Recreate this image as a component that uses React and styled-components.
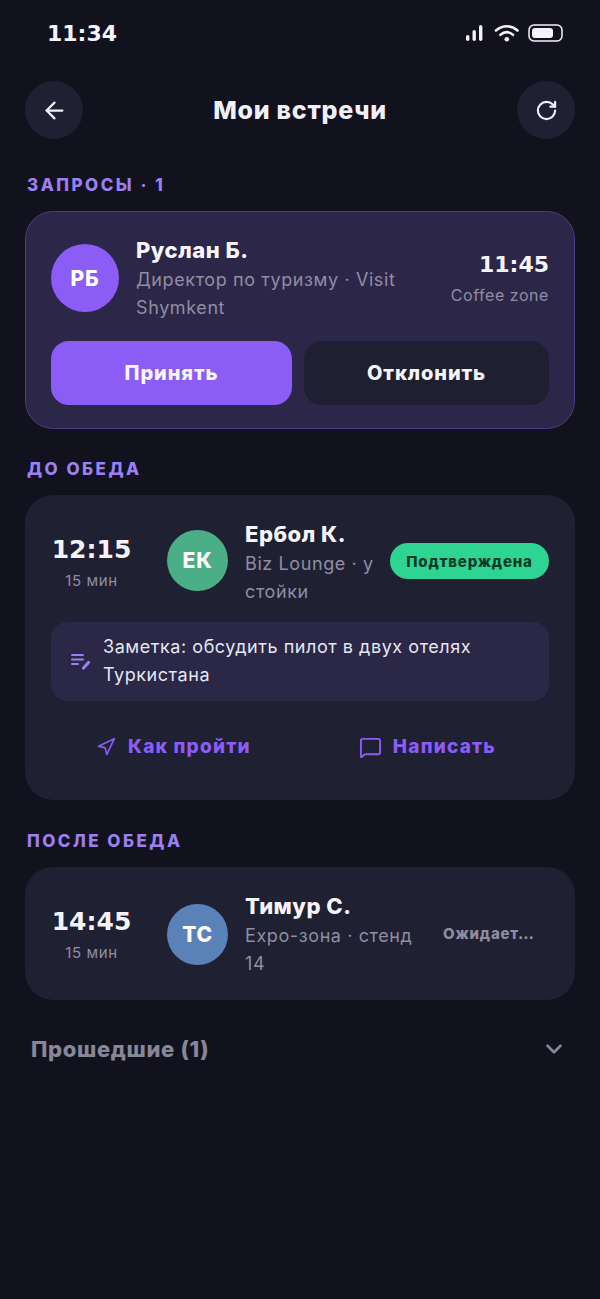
import React from "react";
import styled, { createGlobalStyle } from "styled-components";
import { ArrowLeft, RotateCw, Navigation, MessageSquare, ChevronDown } from "lucide-react";

const Global = createGlobalStyle`
  html, body { margin: 0; padding: 0; background: #12121f; }
  * { box-sizing: border-box; }
  body { font-family: Inter, "Noto Sans", sans-serif; }
`;

const Page = styled.div`
  width: 600px;
  min-height: 1299px;
  background: #12121f;
  color: #f1f0f8;
  padding: 0 25px;
`;

const StatusBar = styled.div`
  height: 81px;
  padding: 21px 11px 0 22px;
  display: flex;
  justify-content: space-between;
  align-items: flex-start;
`;

const Clock = styled.div`
  font: 700 22px/26px "DejaVu Sans", sans-serif;
  color: #f4f3fa;
`;

const StatusIcons = styled.svg`
  display: block;
  margin-top: 3px;
`;

const Header = styled.header`
  display: flex;
  justify-content: space-between;
  align-items: center;
  height: 58px;
`;

const RoundButton = styled.div`
  width: 58px;
  height: 58px;
  border-radius: 50%;
  background: #1f2032;
  display: flex;
  align-items: center;
  justify-content: center;
  color: #f1f0f8;
`;

const Title = styled.h1`
  margin: 0;
  font-size: 25px;
  font-weight: 800;
  letter-spacing: 0.75px;
`;

const SectionLabel = styled.div`
  margin-top: ${(p) => p.$top}px;
  margin-left: 2px;
  margin-bottom: 16px;
  height: 20px;
  font-size: 17px;
  line-height: 20px;
  font-weight: 800;
  letter-spacing: 2.5px;
  color: #9b80f0;
`;

const RequestCard = styled.section`
  height: 218px;
  border-radius: 28px;
  background: #2c2748;
  border: 1.5px solid #483d87;
  padding: 23px 25px 0;
`;

const CardRow = styled.div`
  display: flex;
  align-items: flex-start;
`;

const Avatar = styled.div`
  width: ${(p) => p.$size}px;
  height: ${(p) => p.$size}px;
  margin-top: ${(p) => p.$top}px;
  flex: none;
  border-radius: 50%;
  background: ${(p) => p.$bg};
  color: #fff;
  font-size: 21px;
  font-weight: 800;
  letter-spacing: 0.8px;
  display: flex;
  align-items: center;
  justify-content: center;
`;

const Info = styled.div`
  width: ${(p) => p.$width}px;
  margin-left: 17px;
  flex: none;
`;

const Name = styled.div`
  font-size: 22px;
  line-height: 30px;
  font-weight: 800;
  letter-spacing: 0.5px;
  color: #f6f5fb;
  margin-bottom: 1px;
`;

const Sub = styled.div`
  font-size: 18px;
  line-height: 27.5px;
  letter-spacing: 0.6px;
  color: #918da3;
`;

const RequestTime = styled.div`
  margin-left: auto;
  margin-top: 15px;
  text-align: right;
`;

const TimeText = styled.div`
  font: 700 ${(p) => p.$size}px/30px "DejaVu Sans", sans-serif;
  color: #f4f3fa;
`;

const Place = styled.div`
  font-size: 16px;
  line-height: 22px;
  letter-spacing: 0.55px;
  margin-top: 4px;
  color: #918da3;
`;

const RequestActions = styled.div`
  display: grid;
  grid-template-columns: 241px 245px;
  gap: 12px;
  margin-top: 20px;
`;

const ActionButton = styled.div`
  height: 64px;
  border-radius: 18px;
  background: ${(p) => (p.$primary ? "#8b5cf6" : "#1e1f30")};
  color: #f6f5fb;
  font-size: 20px;
  font-weight: 800;
  letter-spacing: 0.9px;
  display: flex;
  align-items: center;
  justify-content: center;
`;

const MeetingCard = styled.section`
  border-radius: 28px;
  background: #1f2032;
  padding: 24px 26px ${(p) => p.$bottom}px;
`;

const TimeCol = styled.div`
  width: 81px;
  margin-top: 16px;
  margin-right: 35px;
  flex: none;
  text-align: center;
`;

const Duration = styled.div`
  font-size: 15px;
  line-height: 20px;
  letter-spacing: 0.6px;
  margin-top: 6px;
  color: #918da3;
`;

const Badge = styled.div`
  margin-left: auto;
  margin-top: 24px;
  height: 36px;
  width: 159px;
  border-radius: 18px;
  background: #2dd492;
  color: #063a27;
  font-size: 15px;
  font-weight: 800;
  letter-spacing: 0.8px;
  display: flex;
  align-items: center;
  justify-content: center;
`;

const PendingBadge = styled.div`
  margin-left: auto;
  margin-top: 33px;
  width: 106px;
  font-size: 15px;
  line-height: 20px;
  font-weight: 800;
  letter-spacing: 0.8px;
  color: #8f8e9f;
  white-space: nowrap;
`;

const Note = styled.div`
  margin-top: 17px;
  height: 79px;
  border-radius: 16px;
  background: #2a2747;
  padding: 10px 20px 12px;
  display: flex;
  align-items: center;
  gap: 12px;
  font-size: 18px;
  line-height: 28px;
  letter-spacing: 0.55px;
  color: #e6e6f0;
`;

const NoteIcon = styled.svg`
  flex: none;
  color: #9b80f0;
`;

const LinkRow = styled.div`
  display: flex;
  justify-content: space-between;
  margin-top: 26px;
  padding: 0 53px 0 45px;
`;

const LinkAction = styled.div`
  display: flex;
  align-items: center;
  gap: ${(p) => p.$gap}px;
  color: #8b5cf6;
  font-size: 19px;
  line-height: 40px;
  font-weight: 800;
  letter-spacing: 1.2px;
`;

const PastRow = styled.div`
  display: flex;
  justify-content: space-between;
  align-items: center;
  margin-top: 33px;
  padding: 0 8px 0 6px;
  height: 32px;
  color: #878797;
  font-size: 22px;
  font-weight: 800;
  letter-spacing: 0.65px;
`;

function StatusGlyphs() {
  return (
    <StatusIcons width="100" height="20" viewBox="0 0 100 20" fill="none">
      <rect x="2" y="11" width="3.4" height="6" rx="1.7" fill="#f4f3fa" />
      <rect x="8.5" y="6" width="3.4" height="11" rx="1.7" fill="#f4f3fa" />
      <rect x="15" y="1" width="3.4" height="16" rx="1.7" fill="#f4f3fa" />
      <path d="M32 6.5c6.5-5.7 15-5.7 21.5 0" stroke="#f4f3fa" strokeWidth="2.6" strokeLinecap="round" />
      <path d="M36.5 10.8c4-3.4 8.5-3.4 12.5 0" stroke="#f4f3fa" strokeWidth="2.6" strokeLinecap="round" />
      <circle cx="42.8" cy="15.2" r="2.3" fill="#f4f3fa" />
      <rect x="65" y="1" width="33" height="16" rx="5" stroke="#f4f3fa" strokeWidth="1.5" />
      <rect x="68" y="4" width="21" height="10" rx="3" fill="#f4f3fa" />
    </StatusIcons>
  );
}

export default function App() {
  return (
    <Page>
      <Global />
      <StatusBar>
        <Clock>11:34</Clock>
        <StatusGlyphs />
      </StatusBar>
      <Header>
        <RoundButton><ArrowLeft size={27} strokeWidth={2} /></RoundButton>
        <Title>Мои встречи</Title>
        <RoundButton><RotateCw size={23} strokeWidth={2.2} /></RoundButton>
      </Header>

      <SectionLabel $top={36}>ЗАПРОСЫ · 1</SectionLabel>
      <RequestCard>
        <CardRow>
          <Avatar $size={68} $top={9} $bg="#8b5cf6">РБ</Avatar>
          <Info $width={275}>
            <Name>Руслан Б.</Name>
            <Sub>Директор по туризму · Visit Shymkent</Sub>
          </Info>
          <RequestTime>
            <TimeText $size={22}>11:45</TimeText>
            <Place>Coffee zone</Place>
          </RequestTime>
        </CardRow>
        <RequestActions>
          <ActionButton $primary>Принять</ActionButton>
          <ActionButton>Отклонить</ActionButton>
        </RequestActions>
      </RequestCard>

      <SectionLabel $top={30}>ДО ОБЕДА</SectionLabel>
      <MeetingCard $bottom={33}>
        <CardRow>
          <TimeCol>
            <TimeText $size={25}>12:15</TimeText>
            <Duration>15 мин</Duration>
          </TimeCol>
          <Avatar $size={61} $top={11} $bg="#4aae87">ЕК</Avatar>
          <Info $width={140}>
            <Name>Ербол К.</Name>
            <Sub>Biz Lounge · у стойки</Sub>
          </Info>
          <Badge>Подтверждена</Badge>
        </CardRow>
        <Note>
          <NoteIcon width="20" height="20" viewBox="0 0 20 20" fill="none">
            <path d="M1 4h11M1 8.5h11M1 13h6" stroke="currentColor" strokeWidth="1.9" strokeLinecap="round" />
            <path d="M12.5 17l5-5.500" stroke="currentColor" strokeWidth="3.2" strokeLinecap="round" />
          </NoteIcon>
          <span>Заметка: обсудить пилот в двух отелях Туркистана</span>
        </Note>
        <LinkRow>
          <LinkAction $gap={12}><Navigation size={20} strokeWidth={2} />Как пройти</LinkAction>
          <LinkAction $gap={11}><MessageSquare size={23} strokeWidth={2} />Написать</LinkAction>
        </LinkRow>
      </MeetingCard>

      <SectionLabel $top={31}>ПОСЛЕ ОБЕДА</SectionLabel>
      <MeetingCard $bottom={23}>
        <CardRow>
          <TimeCol>
            <TimeText $size={25}>14:45</TimeText>
            <Duration>15 мин</Duration>
          </TimeCol>
          <Avatar $size={61} $top={13} $bg="#5b82b8">ТС</Avatar>
          <Info $width={170}>
            <Name>Тимур С.</Name>
            <Sub>Expo-зона · стенд 14</Sub>
          </Info>
          <PendingBadge>Ожидает…</PendingBadge>
        </CardRow>
      </MeetingCard>

      <PastRow>
        <span>Прошедшие (1)</span>
        <ChevronDown size={26} strokeWidth={2.4} />
      </PastRow>
    </Page>
  );
}
